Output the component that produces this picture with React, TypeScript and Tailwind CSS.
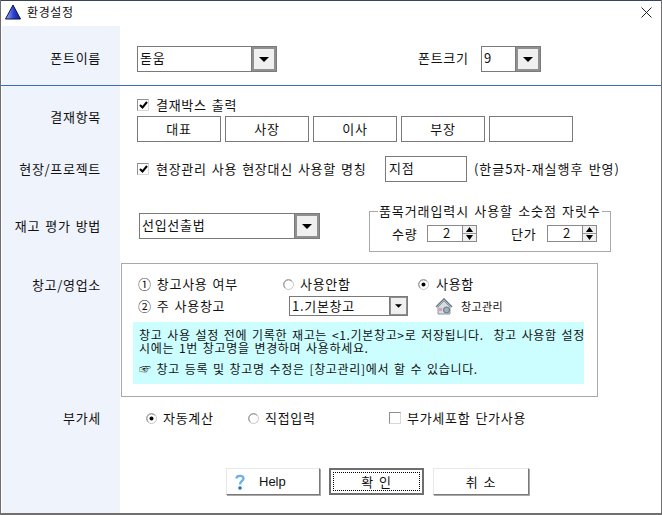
import { ReactNode } from "react";

const Arrow = ({ small = false }: { small?: boolean }) => (
  <svg width={small ? 7 : 10} height={small ? 4 : 5} viewBox="0 0 10 5">
    <path d="M0 0h10L5 5z" fill="#000" />
  </svg>
);

const Combo = ({ text, width, small = false }: { text: string; width: string; small?: boolean }) => (
  <div className={`flex border border-[#7a7a7a] bg-white ${width} ${small ? "h-[20px]" : "h-[26px]"}`}>
    <div className={`flex-1 pl-[2px] border-r border-[#7a7a7a] ${small ? "leading-[17px]" : "leading-[22px]"}`}>{text}</div>
    <div className={`${small ? "w-[17px] border" : "w-[24px] border-2"} flex items-center justify-center bg-[#f0f0f0] border-[#909090]`}>
      <Arrow small={small} />
    </div>
  </div>
);

const Check = ({ on = false }: { on?: boolean }) => (
  <span className="flex h-[12px] w-[12px] shrink-0 items-center justify-center border border-t-[#8e8e8e] border-l-[#8e8e8e] border-r-[#d8d8d8] border-b-[#d8d8d8] bg-white">
    {on && (
      <svg width="9" height="8" viewBox="0 0 9 8">
        <path d="M1 4l2.5 2.5L8 1" fill="none" stroke="#000" strokeWidth="2" />
      </svg>
    )}
  </span>
);

const Radio = ({ on = false }: { on?: boolean }) => (
  <svg width="11" height="11" viewBox="0 0 11 11" className="shrink-0">
    <circle cx="5.5" cy="5.5" r="5" fill="#fff" stroke="#c4c4c4" />
    <path d="M2.2 8.8A4.7 4.7 0 0 1 2.2 2.2A4.7 4.7 0 0 1 8.8 2.2" fill="none" stroke="#8a8a8a" />
    {on && <circle cx="5.5" cy="5.5" r="2" fill="#000" />}
  </svg>
);

const Spinner = () => (
  <div className="flex h-[17px] w-[50px] border border-[#8a8a8a] bg-white">
    <div className="flex-1 pl-1 text-center leading-[14px]">2</div>
    <div className="flex w-[14px] flex-col border-l border-[#8a8a8a] bg-[#f0f0f0]">
      <div className="flex h-[8px] items-center justify-center border-b border-[#9a9a9a]">
        <svg width="7" height="5" viewBox="0 0 7 5"><path d="M3.5 0L7 5H0z" /></svg>
      </div>
      <div className="flex flex-1 items-center justify-center">
        <svg width="7" height="5" viewBox="0 0 7 5"><path d="M0 0h7L3.5 5z" /></svg>
      </div>
    </div>
  </div>
);

const NameBox = ({ children }: { children?: ReactNode }) => (
  <div className="flex h-[26px] w-[84px] items-center justify-center border border-[#7a7a7a] bg-white">{children}</div>
);

const Row = ({ label, h, labelTop, children }: { label: string; h: string; labelTop: string; children: ReactNode }) => (
  <div className={`flex ${h}`}>
    <div className={`ml-[1px] w-[118px] shrink-0 whitespace-nowrap bg-[#eff3fb] pr-[19px] text-right ${labelTop}`}>{label}</div>
    <div className="relative flex-1">{children}</div>
  </div>
);

const Btn = ({ children, def = false, w, className = "justify-center" }: { children: ReactNode; def?: boolean; w: string; className?: string }) => (
  <div
    className={`flex h-[27px] ${w} items-center bg-white ${className} ${
      def
        ? "border-2 border-[#6e6e6e]"
        : "border border-t-[#e8e8e8] border-l-[#e8e8e8] border-r-[#7a7a7a] border-b-[#7a7a7a] shadow-[1px_1px_0_#a8a8a8]"
    }`}
  >
    {children}
  </div>
);

export default function App() {
  return (
    <div className="flex h-[515px] w-[662px] flex-col overflow-hidden border-x border-b-2 border-x-[#6f6f6f] border-b-[#6f6f6f] bg-white font-['Noto_Sans_CJK_KR',sans-serif] text-[13px] leading-[16px] tracking-[0.7px] [word-spacing:1.5px] text-[#111]">
      <div className="flex h-[26px] shrink-0 items-center border-t border-[#39435a] pb-[3px] pl-[4px] pr-[9px]">
        <svg width="16" height="16" viewBox="0 0 16 16">
          <defs>
            <linearGradient id="tri" x1="0" y1="0" x2="1" y2="0">
              <stop offset="0" stopColor="#9fb4f2" />
              <stop offset="0.55" stopColor="#2a3fd0" />
              <stop offset="1" stopColor="#10208a" />
            </linearGradient>
          </defs>
          <path d="M8 1L15.5 15H.5z" fill="url(#tri)" stroke="#0b1250" />
        </svg>
        <span className="ml-[6px] flex-1 text-[12px] tracking-[0.6px]">환경설정</span>
        <svg width="11" height="11" viewBox="0 0 11 11">
          <path d="M.5.5l10 10M10.5.5l-10 10" stroke="#222" fill="none" />
        </svg>
      </div>

      <Row label="폰트이름" h="h-[59px]" labelTop="pt-[24px]">
        <div className="flex items-start pt-[20px] pl-[17px]">
          <Combo text="돋움" width="w-[140px]" />
          <span className="ml-[141px] mt-[4px] w-[63px]">폰트크기</span>
          <Combo text="9" width="w-[60px]" />
        </div>
      </Row>
      <div className="h-[1px] shrink-0 bg-[#3b6db0]" />

      <Row label="결재항목" h="h-[64px]" labelTop="pt-[23px]">
        <div className="pl-[17px] pt-[11px]">
          <div className="flex items-center gap-[7px]">
            <Check on />
            <span>결재박스 출력</span>
          </div>
          <div className="mt-[3px] flex gap-[4px]">
            <NameBox>대표</NameBox>
            <NameBox>사장</NameBox>
            <NameBox>이사</NameBox>
            <NameBox>부장</NameBox>
            <NameBox />
          </div>
        </div>
      </Row>

      <Row label="현장/프로젝트" h="h-[46px]" labelTop="pt-[11px]">
        <div className="flex items-start pl-[17px] pt-[6px]">
          <div className="mt-[5px] flex items-center gap-[7px]">
            <Check on />
            <span className="w-[229px] whitespace-nowrap">현장관리 사용 현장대신 사용할 명칭</span>
          </div>
          <div className="h-[26px] w-[82px] border border-[#7a7a7a] pl-[3px] leading-[22px]">지점</div>
          <span className="ml-[7px] mt-[5px] whitespace-nowrap tracking-[0.95px]">(한글5자-재실행후 반영)</span>
        </div>
      </Row>

      <Row label="재고 평가 방법" h="h-[67px]" labelTop="pt-[22px]">
        <div className="flex items-start pl-[19px] pt-[17px]">
          <Combo text="선입선출법" width="w-[181px]" />
          <fieldset className="ml-[49px] -mt-[10px] h-[49px] w-[242px] border border-[#a9a9a9] pb-0 pl-[22px] pr-0">
            <legend className="ml-[-14px] whitespace-nowrap px-[1px] tracking-[0.9px]">품목거래입력시 사용할 소숫점 자릿수</legend>
            <div className="flex items-center pt-[6px]">
              <span className="w-[35px]">수량</span>
              <Spinner />
              <span className="ml-[34px] w-[36px]">단가</span>
              <Spinner />
            </div>
          </fieldset>
        </div>
      </Row>

      <Row label="창고/영업소" h="h-[134px]" labelTop="pt-[14px]">
        <div className="ml-[1px] h-[134px] w-[477px] border border-[#a9a9a9] pl-[11px] pt-[12px]">
          <div className="flex h-[16px] items-center pl-[5px]">
            <span className="w-[145px] whitespace-nowrap">① 창고사용 여부</span>
            <Radio />
            <span className="ml-[6px] w-[118px]">사용안함</span>
            <Radio on />
            <span className="ml-[7px]">사용함</span>
          </div>
          <div className="mt-[4px] flex h-[20px] items-center pl-[5px]">
            <span className="w-[151px] whitespace-nowrap">② 주 사용창고</span>
            <Combo text="1.기본창고" width="w-[119px]" small />
            <svg width="18" height="17" viewBox="0 0 18 17" className="ml-[27px]">
              <path d="M1 9L9 1l8 8" fill="none" stroke="#6d7a86" strokeWidth="1.6" />
              <path d="M3 9v7h12V9L9 3z" fill="#d5dce2" stroke="#8b96a1" />
              <rect x="4" y="10" width="3" height="3" fill="#d9a3a8" />
              <circle cx="11.5" cy="12" r="3" fill="#9fb0bf" stroke="#66737f" />
            </svg>
            <span className="ml-[8px] text-[11px] tracking-[0.4px]">창고관리</span>
          </div>
          <div className="mt-[6px] h-[62px] w-[451px] bg-[#ccfeff] pl-[6px] pt-[6px] text-[12px] leading-[13px] tracking-[0.66px]">
            <p className="whitespace-nowrap">창고 사용 설정 전에 기록한 재고는 &lt;1.기본창고&gt;로 저장됩니다.&nbsp; 창고 사용함 설정</p>
            <p className="whitespace-nowrap">시에는 1번 창고명을 변경하며 사용하세요.</p>
            <p className="mt-[8px] whitespace-nowrap">☞ 창고 등록 및 창고명 수정은 [창고관리]에서 할 수 있습니다.</p>
          </div>
        </div>
      </Row>

      <Row label="부가세" h="flex-1" labelTop="pt-[13px]">
        <div className="flex items-center pl-[26px] pt-[13px]">
          <Radio on />
          <span className="ml-[6px] w-[85px]">자동계산</span>
          <Radio />
          <span className="ml-[6px] w-[124px]">직접입력</span>
          <Check />
          <span className="ml-[6px] whitespace-nowrap">부가세포함 단가사용</span>
        </div>
        <div className="mt-[42px] flex gap-[9px] pl-[106px]">
          <Btn w="w-[94px]" className="justify-start pl-[8px]">
            <svg width="10" height="16" viewBox="0 0 10 16" className="mr-[14px]">
              <path d="M1.5 4.5C1.5 1.5 8.5 .5 8.5 4.5c0 2.5-3.5 2.5-3.5 6" fill="none" stroke="#6bb0e8" strokeWidth="2.4" />
              <circle cx="5" cy="14" r="1.8" fill="#1f6fc0" />
            </svg>
            <span className="font-['Liberation_Sans',sans-serif] tracking-normal">Help</span>
          </Btn>
          <Btn w="w-[95px]" def>
            <span className="flex h-[19px] w-[87px] items-center justify-center border border-dotted border-black">확 인</span>
          </Btn>
          <Btn w="w-[96px]">취 소</Btn>
        </div>
      </Row>
    </div>
  );
}
